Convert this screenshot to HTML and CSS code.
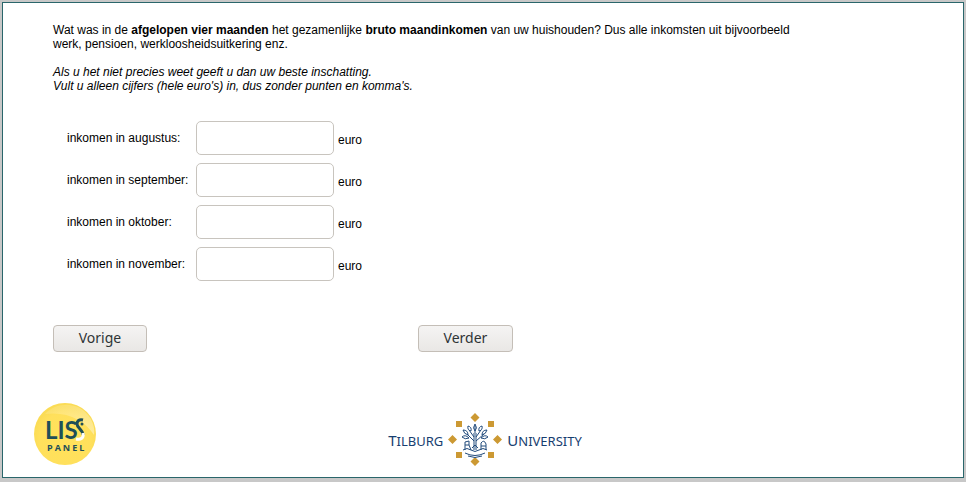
FILE: index.html
```html
<!DOCTYPE html>
<html lang="nl">
<head>
<meta charset="utf-8">
<meta name="viewport" content="width=device-width, initial-scale=1">
<title>LISS panel</title>
<link rel="stylesheet" href="styles.css">
</head>
<body>
<main class="page">
  <form class="survey">
    <div class="question">
      <p>Wat was in de <b>afgelopen vier maanden</b> het gezamenlijke <b>bruto maandinkomen</b> van uw huishouden? Dus alle inkomsten uit bijvoorbeeld werk, pensioen, werkloosheidsuitkering enz.</p>
      <p><i>Als u het niet precies weet geeft u dan uw beste inschatting.<br>Vult u alleen cijfers (hele euro's) in, dus zonder punten en komma's.</i></p>
    </div>
    <div class="answers">
      <div class="answer"><label for="aug">inkomen in augustus:</label><input id="aug" type="text"><span class="unit">euro</span></div>
      <div class="answer"><label for="sep">inkomen in september:</label><input id="sep" type="text"><span class="unit">euro</span></div>
      <div class="answer"><label for="okt">inkomen in oktober:</label><input id="okt" type="text"><span class="unit">euro</span></div>
      <div class="answer"><label for="nov">inkomen in november:</label><input id="nov" type="text"><span class="unit">euro</span></div>
    </div>
    <div class="buttons">
      <button type="button">Vorige</button>
      <button type="button">Verder</button>
    </div>
  </form>
  <footer class="footer">
    <svg class="liss" viewBox="0 0 64 64" role="img" aria-label="LISS panel">
      <defs>
        <radialGradient id="sun" cx="50%" cy="58%" r="52%">
          <stop offset="0" stop-color="#ffe25a"/>
          <stop offset=".8" stop-color="#ffe05c"/>
          <stop offset="1" stop-color="#fbdc55"/>
        </radialGradient>
        <linearGradient id="shine" x1="0" y1="0" x2="1" y2="1">
          <stop offset="0" stop-color="#fff" stop-opacity=".1"/>
          <stop offset="1" stop-color="#fff" stop-opacity=".4"/>
        </linearGradient>
      </defs>
      <circle cx="32" cy="31" r="31" fill="url(#sun)"/>
      <path d="M12 11C24-2 45-1 55 12C60 18 62 25 61 32C52 17 34 8 12 11Z" fill="url(#shine)"/>
      <text class="liss-name" x="12" y="36">LIS</text>
      <path d="M50 17C46 16 44 18 44 21C44 25 50 27 50 32" fill="none" stroke="#1f4f58" stroke-width="3"/>
      <path d="M50 30C51 35 48 37 43 36" fill="none" stroke="#fff" stroke-width="3"/>
      <circle cx="49" cy="21" r="1.500" fill="#1f4f58"/>
      <text class="liss-panel" x="14" y="48">PANEL</text>
    </svg>
    <div class="university">
      <span class="word"><span class="initial">T</span>ILBURG</span>
      <svg class="crest" viewBox="0 0 54 54" aria-hidden="true">
        <g fill="#cc9933">
          <path d="M27 0l4.500 4.500L27 9l-4.500-4.500zM27 44l4.500 4.500L27 53l-4.500-4.500zM4.500 22l4.500 4.500L4.500 31L0 26.500zM49.500 22l4.500 4.500l-4.500 4.500l-4.500-4.500z"/>
          <path d="M8 8h6v6H8zM40 8h6v6h-6zM8 39h6v6H8zM40 39h6v6h-6z"/>
        </g>
        <g fill="none" stroke="#234c7d" stroke-width="1">
          <path d="M26 37V20M28 37V20M26 28L19 21M28 28L36 21M26 24L21 17M28 24L33 17M27 20V13"/>
          <path d="M27 18Q24 15 27 11Q30 15 27 18ZM23 18Q19 17 20 13Q24 14 23 18ZM31 18Q35 17 34 13Q30 14 31 18ZM20 22Q16 21 15 17Q20 17 20 22ZM34 22Q38 21 39 17Q34 17 34 22ZM21 25Q17 27 14 24Q17 21 21 25ZM33 25Q37 27 40 24Q37 21 33 25Z"/>
          <path d="M17 37V29L21 28V32H17M21 32L23 37M33 37V30Q36 26 38 31V37M33 33H38M15 37Q19 34 23 37T31 37T39 37M17 40Q27 45 37 40M20 43Q27 46 34 43M24 35L27 32L30 35"/>
        </g>
      </svg>
      <span class="word"><span class="initial">U</span>NIVERSITY</span>
    </div>
  </footer>
</main>
</body>
</html>
```
FILE: styles.css
```css
* {
  box-sizing: border-box;
}

body {
  margin: 0;
  padding: 2px 2px 4px;
  min-height: 100vh;
  display: flex;
  background: #c8c8c8;
  color: #000;
  font: 12px/14px "Liberation Sans", Arial, sans-serif;
}

.page {
  flex: 1;
  display: flex;
  flex-direction: column;
  justify-content: space-between;
  border: 1px solid #29666b;
  background: #fff;
}

.survey {
  padding: 20px 50px 0;
}

.question {
  max-width: 760px;
}

.question p {
  margin: 0 0 14px;
}

.answers {
  display: grid;
  gap: 8px;
  padding: 14px 14px 0;
}

.answer {
  display: grid;
  grid-template-columns: 125px 138px auto;
  column-gap: 4px;
  align-items: center;
}

.answer input {
  width: 100%;
  height: 34px;
  padding: 4px 8px;
  border: 1px solid #c8c4be;
  border-radius: 5px;
  background: #fff;
  font: inherit;
}

.unit {
  padding-top: 4px;
}

.buttons {
  display: grid;
  grid-template-columns: 94px 95px;
  column-gap: 271px;
  margin-top: 44px;
}

.buttons button {
  height: 27px;
  padding: 0 0 2px;
  border: 1px solid #c4beb7;
  border-radius: 4px;
  background: linear-gradient(#f5f4f3, #e9e7e5);
  color: #2e3436;
  font: 14px/20px "Noto Sans", sans-serif;
}

.footer {
  display: grid;
  grid-template-columns: 1fr auto 1fr;
  align-items: center;
  padding: 0 26px 10px 30px;
}

.liss {
  width: 64px;
  height: 64px;
}

.liss-name {
  fill: #1f4f58;
  font: bold 24px Lato, sans-serif;
}

.liss-panel {
  fill: #1f4f58;
  font: bold 9px "Open Sans", sans-serif;
  letter-spacing: 2px;
}

.university {
  display: flex;
  align-items: center;
  gap: 5px;
  margin-top: 10px;
  color: #173e70;
}

.word {
  font: 13px/18px "Noto Sans", sans-serif;
}

.initial {
  font-size: 15px;
}

.crest {
  width: 54px;
  height: 54px;
}
```
